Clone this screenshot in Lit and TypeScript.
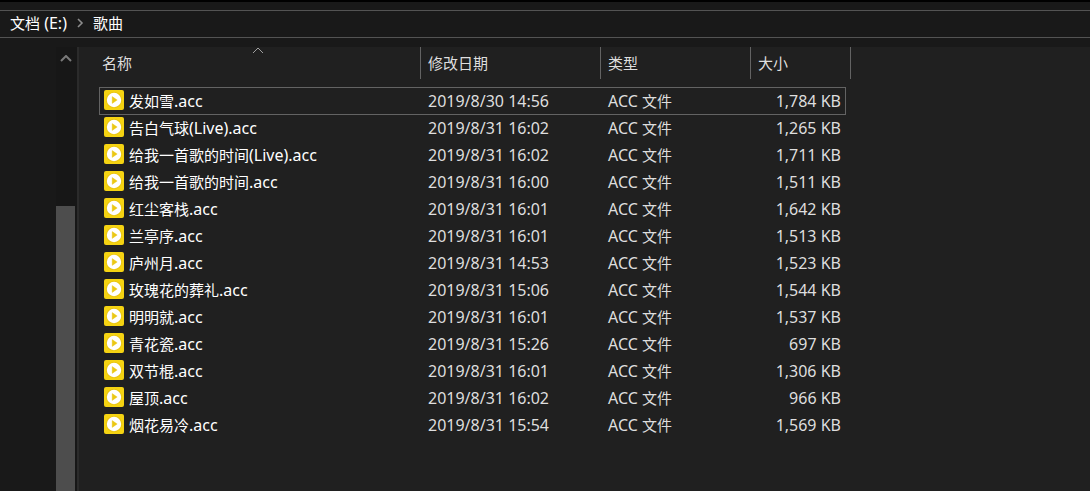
import { LitElement, html, css, svg } from "lit";
import { customElement, property, state } from "lit/decorators.js";
import { classMap } from "lit/directives/class-map.js";

interface Song {
  name: string;
  modified: string;
  size: string;
}

const SONGS: Song[] = [
  { name: "发如雪.acc", modified: "2019/8/30 14:56", size: "1,784 KB" },
  { name: "告白气球(Live).acc", modified: "2019/8/31 16:02", size: "1,265 KB" },
  { name: "给我一首歌的时间(Live).acc", modified: "2019/8/31 16:02", size: "1,711 KB" },
  { name: "给我一首歌的时间.acc", modified: "2019/8/31 16:00", size: "1,511 KB" },
  { name: "红尘客栈.acc", modified: "2019/8/31 16:01", size: "1,642 KB" },
  { name: "兰亭序.acc", modified: "2019/8/31 16:01", size: "1,513 KB" },
  { name: "庐州月.acc", modified: "2019/8/31 14:53", size: "1,523 KB" },
  { name: "玫瑰花的葬礼.acc", modified: "2019/8/31 15:06", size: "1,544 KB" },
  { name: "明明就.acc", modified: "2019/8/31 16:01", size: "1,537 KB" },
  { name: "青花瓷.acc", modified: "2019/8/31 15:26", size: "697 KB" },
  { name: "双节棍.acc", modified: "2019/8/31 16:01", size: "1,306 KB" },
  { name: "屋顶.acc", modified: "2019/8/31 16:02", size: "966 KB" },
  { name: "烟花易冷.acc", modified: "2019/8/31 15:54", size: "1,569 KB" },
];

/** Wraps the Latin runs of a label, which are set one pixel larger than the Han runs. */
const mixed = (text: string) =>
  text
    .split(/([\x20-\x7e]+)/)
    .filter((run) => run)
    .map((run) => (/^[\x20-\x7e]/.test(run) ? html`<span class="latin">${run}</span>` : run));

const chevronUp = svg`<path d="M1 6 L6 1 L11 6" fill="none" stroke="currentColor" />`;

@customElement("play-icon")
export class PlayIcon extends LitElement {
  static styles = css`
    :host {
      display: block;
      flex: none;
      width: 20px;
      height: 20px;
    }
    svg {
      display: block;
    }
  `;

  render() {
    return html`<svg width="20" height="20" viewBox="0 0 20 20" aria-hidden="true">
      <rect width="20" height="20" rx="2" fill="#f5d312" />
      <circle cx="10" cy="10" r="8" fill="#e8c310" />
      <circle cx="10" cy="10" r="7.2" fill="#fff" />
      <path d="M8.2 6.6 L13.2 10 L8.2 13.4 Z" fill="#ebc814" stroke="#ebc814" stroke-width="0.4" />
    </svg>`;
  }
}

@customElement("path-bar")
export class PathBar extends LitElement {
  static styles = css`
    nav {
      display: flex;
      align-items: center;
      box-sizing: border-box;
      height: 28px;
      padding: 0 10px 2px;
      border-top: 1px solid #535353;
      border-bottom: 1px solid #535353;
      background: #191919;
    }
    a {
      color: #fff;
      text-decoration: none;
      white-space: nowrap;
    }
    .latin {
      font-size: 16px;
    }
    svg {
      flex: none;
      margin: 0 9px;
    }
  `;

  render() {
    return html`<nav aria-label="路径">
      <a href="#drive">${mixed("文档 (E:)")}</a>
      <svg width="8" height="10" viewBox="0 0 8 10" aria-hidden="true">
        <path d="M2 1 L6 5 L2 9" fill="none" stroke="#8c8c8c" stroke-width="1.6" />
      </svg>
      <a href="#songs" aria-current="page">歌曲</a>
    </nav>`;
  }
}

@customElement("file-list")
export class FileList extends LitElement {
  @property({ attribute: false }) songs: Song[] = [];
  @state() private focused = 0;

  static styles = css`
    :host {
      display: block;
    }
    table {
      table-layout: fixed;
      width: 756px;
      border-collapse: separate;
      border-spacing: 0;
      color: #dedede;
    }
    .col-name {
      width: 326px;
    }
    .col-date {
      width: 180px;
    }
    .col-type {
      width: 150px;
    }
    .col-size {
      width: 100px;
    }
    th {
      position: relative;
      box-sizing: border-box;
      height: 32px;
      padding: 0 7px;
      border-right: 1px solid #636363;
      text-align: left;
      font-weight: normal;
    }
    .sort {
      position: absolute;
      top: 0;
      left: 50%;
      margin-left: -6px;
      color: #a0a0a0;
    }
    td {
      box-sizing: border-box;
      height: 27px;
      padding: 3px 7px 0;
      line-height: 22px;
      vertical-align: top;
      white-space: nowrap;
    }
    .gap td {
      height: 8px;
    }
    .row {
      position: relative;
    }
    .focused::after {
      content: "";
      position: absolute;
      inset: 0 5px -1px 4px;
      border: 1px solid #636363;
      pointer-events: none;
    }
    .name {
      padding-left: 9px;
      color: #fff;
    }
    .file {
      display: flex;
      align-items: flex-start;
      gap: 5px;
    }
    .latin {
      font-size: 16px;
    }
    .size {
      padding-right: 10px;
      text-align: right;
    }
  `;

  render() {
    return html`<table>
      <colgroup>
        <col class="col-name" />
        <col class="col-date" />
        <col class="col-type" />
        <col class="col-size" />
      </colgroup>
      <thead>
        <tr>
          <th scope="col" aria-sort="ascending">
            名称
            <svg class="sort" width="12" height="7" viewBox="0 0 12 7" aria-hidden="true">${chevronUp}</svg>
          </th>
          <th scope="col">修改日期</th>
          <th scope="col">类型</th>
          <th scope="col">大小</th>
        </tr>
        <tr class="gap" aria-hidden="true">
          <td colspan="4"></td>
        </tr>
      </thead>
      <tbody>
        ${this.songs.map(
          (song, i) => html`<tr
            class=${classMap({ row: true, focused: i === this.focused })}
            @click=${() => (this.focused = i)}
          >
            <td class="name">
              <div class="file"><play-icon></play-icon><span>${mixed(song.name)}</span></div>
            </td>
            <td>${mixed(song.modified)}</td>
            <td>${mixed("ACC 文件")}</td>
            <td class="size">${mixed(song.size)}</td>
          </tr>`
        )}
      </tbody>
    </table>`;
  }
}

@customElement("app-root")
export class AppRoot extends LitElement {
  static styles = css`
    :host {
      display: flex;
      flex-direction: column;
      box-sizing: border-box;
      min-height: 100vh;
      padding-top: 8px;
      border-top: 2px solid #000;
      background: #191919;
      font: 15px/20px "Noto Sans", "Noto Sans CJK SC", sans-serif;
    }
    .body {
      display: flex;
      flex: 1;
      margin-top: 9px;
    }
    .scrollbar {
      display: flex;
      flex: none;
      flex-direction: column;
      width: 19px;
      margin-left: 56px;
      padding-right: 2px;
      background: #171717;
    }
    .up {
      height: 19px;
      margin-bottom: 140px;
      padding: 4px 0 0;
      border: 0;
      background: none;
      color: #7a7a7a;
      line-height: 0;
    }
    .up path {
      stroke-width: 2;
    }
    .thumb {
      flex: 1;
      background: #4d4d4d;
    }
    .pane {
      flex: 1;
      min-width: 0;
      padding-left: 16px;
      border-left: 2px solid #2b2b2b;
      background: #202020;
    }
  `;

  render() {
    return html`
      <path-bar></path-bar>
      <div class="body">
        <div class="scrollbar">
          <button class="up" type="button" aria-label="向上滚动">
            <svg width="12" height="8" viewBox="0 0 12 8" aria-hidden="true">${chevronUp}</svg>
          </button>
          <div class="thumb"></div>
        </div>
        <main class="pane">
          <file-list .songs=${SONGS}></file-list>
        </main>
      </div>
    `;
  }
}
